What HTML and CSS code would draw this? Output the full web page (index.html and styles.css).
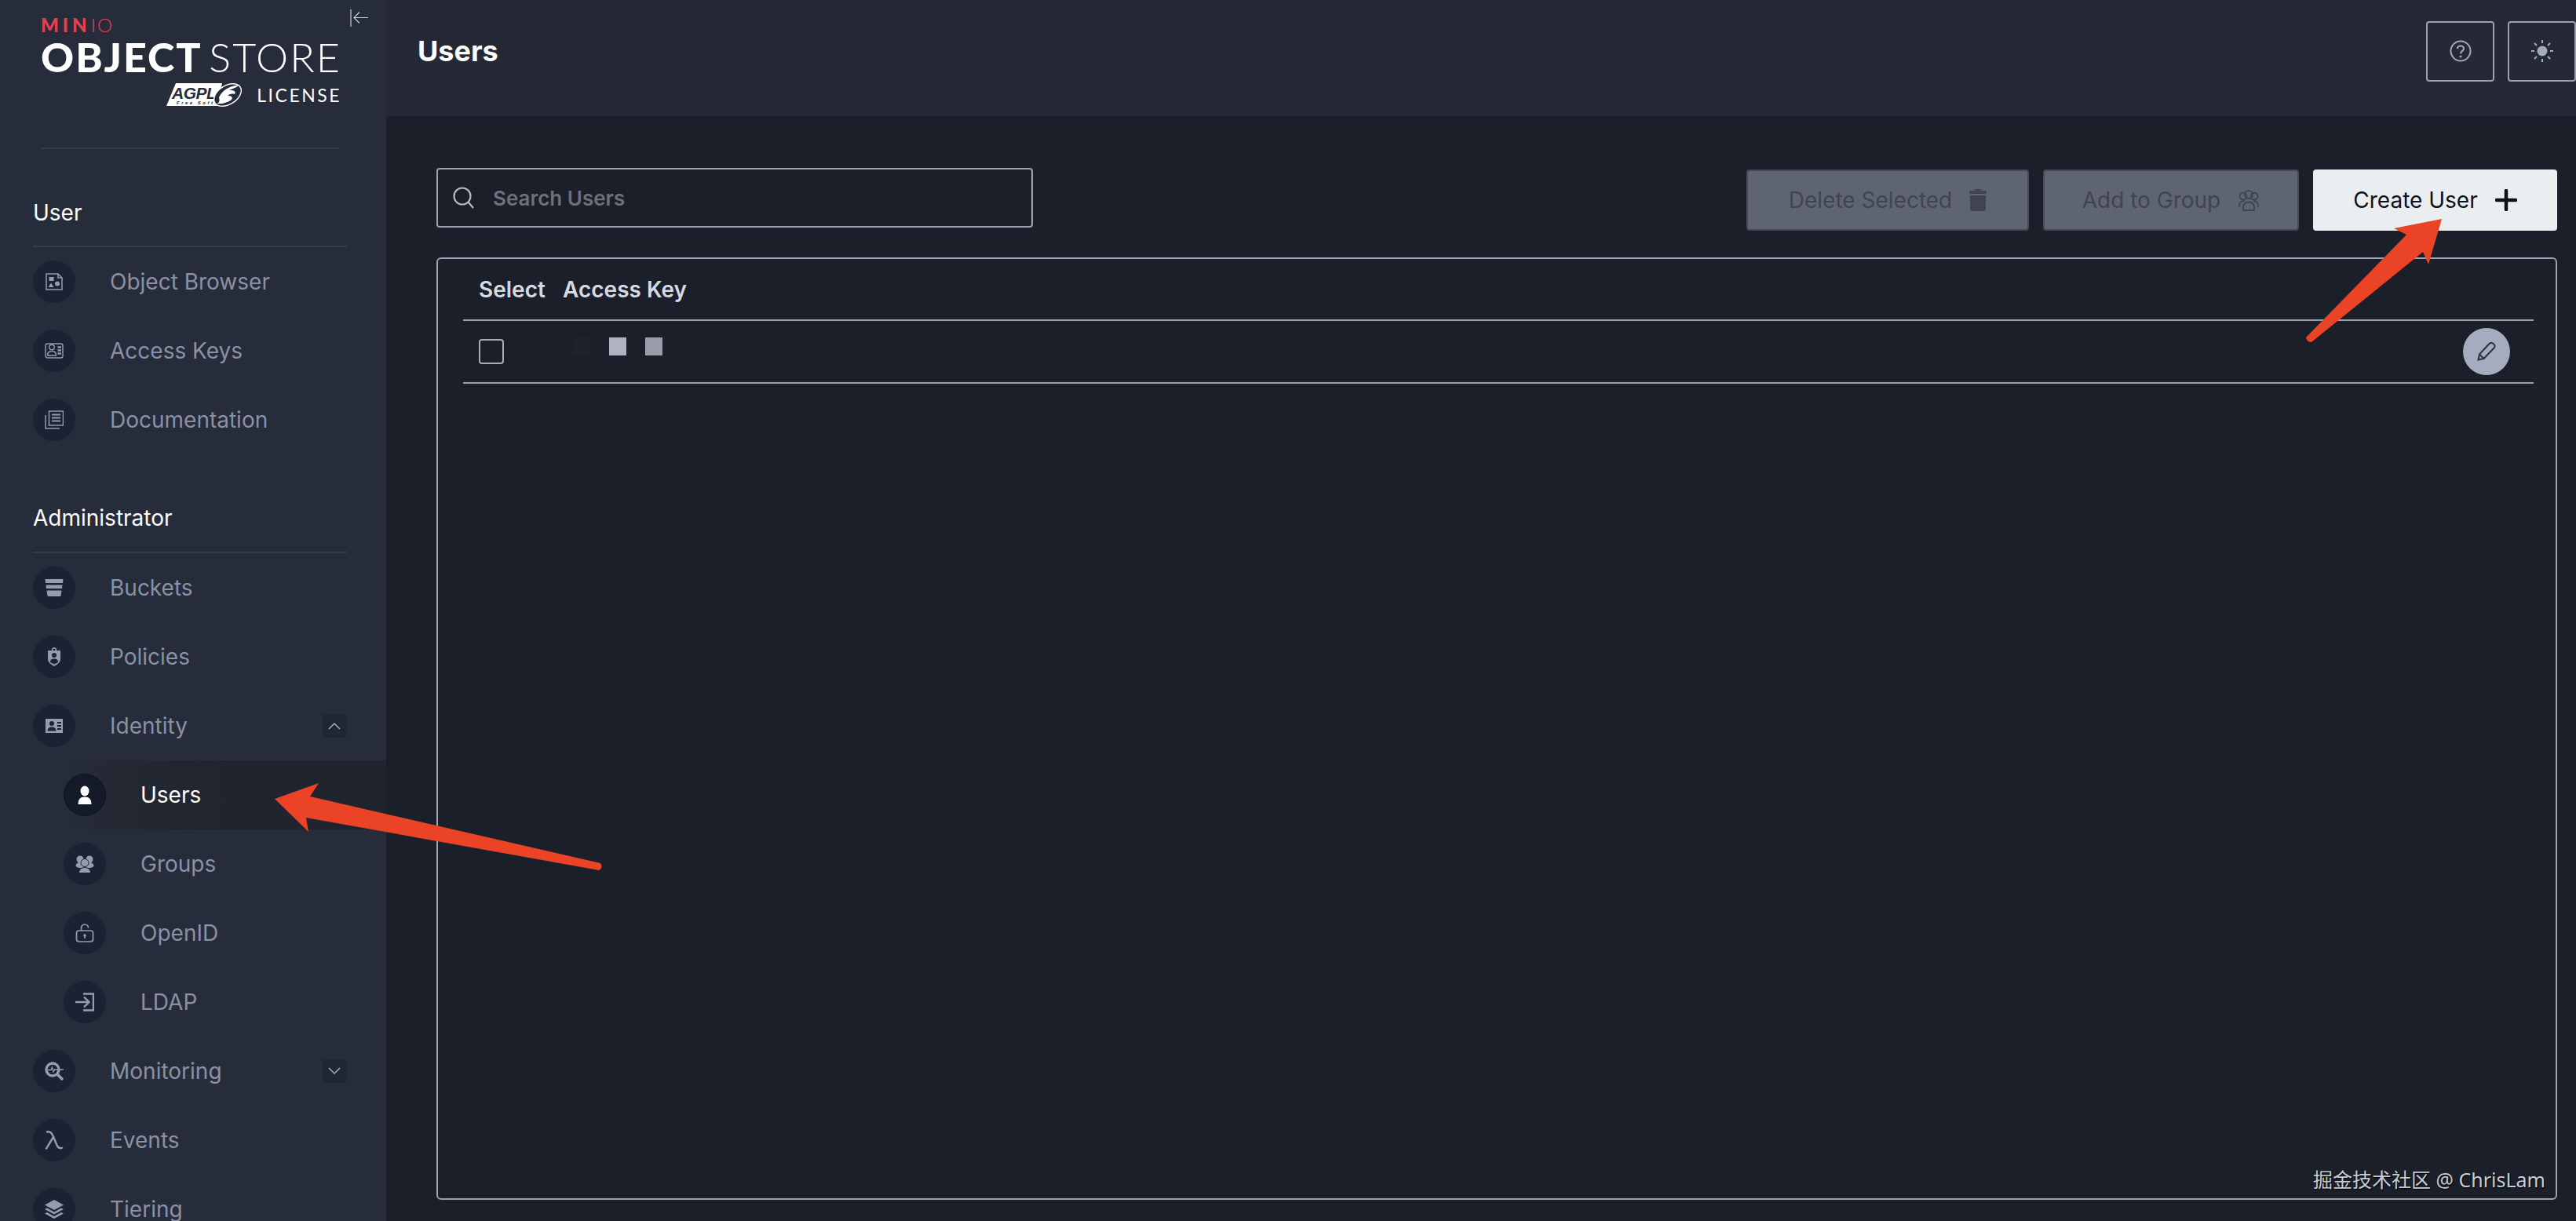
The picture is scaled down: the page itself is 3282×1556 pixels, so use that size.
FILE: index.html
```html
<!DOCTYPE html>
<html lang="en">
<head>
    <meta charset="UTF-8">
    <title>MinIO Console - Users</title>
    <link rel="stylesheet" href="styles.css">
</head>
<body>
    <div class="app">
        <aside class="sidebar">
            <div class="brand">
                <div class="brand-minio"><b>MIN</b><span>IO</span></div>
                <div class="brand-name"><b>OBJECT</b> <span>STORE</span></div>
                <div class="brand-license">
                    <svg class="agpl" width="98" height="34" viewBox="0 0 98 34">
                        <polygon points="13,2 72,2 66,31 1,31" fill="#fff"/>
                        <text x="8" y="22" class="agpl-text">AGPL</text>
                        <text x="14" y="29" class="agpl-small">Free Software</text>
                        <ellipse cx="79" cy="17" rx="19" ry="12" transform="rotate(-32 79 17)" fill="#262b3a" stroke="#fff" stroke-width="1.400"/>
                        <path d="M68 20 C73 9 85 5 94 4 C90 8 85 9 81 11 C87 11 90 12 88 16 C84 15 81 16 79 18 C84 18 86 20 84 23 C79 27 71 29 65 28 C69 27 69 24 68 20Z" fill="#fff"/>
                    </svg>
                    <span>LICENSE</span>
                </div>
            </div>
            <svg class="collapse" width="24" height="24" viewBox="0 0 24 24" fill="none" stroke="#c9cdd6" stroke-width="1.200">
                <path d="M1 1V23M23 11.500H5M12 4.500L5 11.500L12 18.500"/>
            </svg>

            <div class="brand-rule"></div>

            <div class="section first">User</div>
            <a class="item">
                <span class="ico"><svg viewBox="0 0 24 24" fill="none" stroke="currentColor" stroke-width="1.500"><path d="M2 2H17L22 7V22H2Z"/><path d="M17 2V7H22"/><rect x="5.500" y="6" width="6" height="5" fill="currentColor" stroke="none"/><circle cx="16" cy="14.500" r="3" fill="currentColor" stroke="none"/><path d="M8 13.500L11.500 19H4.500Z" fill="currentColor" stroke="none"/></svg></span>
                <span class="label">Object Browser</span>
            </a>
            <a class="item">
                <span class="ico"><svg viewBox="0 0 24 24" fill="none" stroke="currentColor" stroke-width="1.400"><rect x="1" y="3" width="22" height="18" rx="2.500"/><circle cx="9" cy="7.500" r="3.200" fill="#1b2233"/><path d="M3.500 18C3.500 14 6 12.500 9 12.500S14.500 14 14.500 18Z"/><path d="M16.500 7.500H21M16.500 11.500H21M16.500 15.500H21" stroke-width="2.400"/></svg></span>
                <span class="label">Access Keys</span>
            </a>
            <a class="item">
                <span class="ico"><svg viewBox="0 0 24 24" fill="none" stroke="currentColor" stroke-width="1.500"><rect x="5.500" y="1" width="18" height="18"/><path d="M9 5.500H20M9 9.500H20M9 13.500H20" stroke-width="1.800"/><path d="M1 6V23H19"/></svg></span>
                <span class="label">Documentation</span>
            </a>

            <div class="section">Administrator</div>
            <a class="item">
                <span class="ico"><svg viewBox="0 0 24 24" fill="currentColor"><path d="M0.500 1H23.500L23 6H1Z"/><path d="M1.500 8.500H22.500L22 13H2Z"/><path d="M2.500 15.500H21.500L20.500 22C20.400 22.700 20 23 19.500 23H4.500C4 23 3.600 22.700 3.500 22Z"/></svg></span>
                <span class="label">Buckets</span>
            </a>
            <a class="item">
                <span class="ico"><svg viewBox="0 0 24 24" fill="currentColor"><path d="M9 4V3A3 3 0 0 1 15 3V4H20V15C20 19 16 22 12 24C8 22 4 19 4 15V4ZM10.500 4H13.500V3A1.500 1.500 0 0 0 10.500 3Z"/><circle cx="12" cy="10" r="3" fill="#1b2233"/><path d="M7 19C7 15.500 9 14.500 12 14.500S17 15.500 17 19L12 21.500Z" fill="#1b2233"/></svg></span>
                <span class="label">Policies</span>
            </a>
            <a class="item">
                <span class="ico"><svg viewBox="0 0 24 24" fill="currentColor"><path d="M1 3H23V21H1ZM9 6A3 3 0 1 0 9 12A3 3 0 0 0 9 6ZM3.500 18.500H14.500C14.500 15 12 13.500 9 13.500S3.500 15 3.500 18.500ZM16 7V9H21V7ZM16 11V13H21V11ZM16 15V17H21V15Z" fill-rule="evenodd"/></svg></span>
                <span class="label">Identity</span>
                <span class="chev"><svg width="16" height="10" viewBox="0 0 16 10" fill="none" stroke="currentColor" stroke-width="1.500"><path d="M1 9L8 2L15 9"/></svg></span>
            </a>
            <a class="item sub active">
                <span class="ico"><svg viewBox="0 0 24 24" fill="currentColor"><ellipse cx="12" cy="7" rx="5.500" ry="6.500"/><path d="M3.500 24C3.500 17 7 14.500 12 14.500S20.500 17 20.500 24Z"/></svg></span>
                <span class="label">Users</span>
            </a>
            <a class="item sub">
                <span class="ico"><svg viewBox="0 0 24 24" fill="currentColor"><circle cx="6" cy="6" r="4.500"/><circle cx="18" cy="6" r="4.500"/><path d="M0.500 15C0.500 11.500 3 10 6 10H18C21 10 23.500 11.500 23.500 15L20 17H4Z"/><circle cx="12" cy="10.500" r="5" stroke="#1b2233"/><path d="M4.500 23.500C4.500 19 8 16.500 12 16.500S19.500 19 19.500 23.500Z" stroke="#1b2233"/></svg></span>
                <span class="label">Groups</span>
            </a>
            <a class="item sub">
                <span class="ico"><svg viewBox="0 0 24 24" fill="none" stroke="currentColor" stroke-width="1.700"><path d="M7.500 9V5.500A4.500 4.500 0 0 1 16.500 5.500"/><rect x="1.500" y="9" width="21" height="14" rx="3"/><circle cx="12" cy="15" r="1.800" fill="currentColor" stroke="none"/><path d="M12 15V19"/></svg></span>
                <span class="label">OpenID</span>
            </a>
            <a class="item sub">
                <span class="ico"><svg viewBox="0 0 24 24" fill="none" stroke="currentColor" stroke-width="2.400"><path d="M10 1.500H23V22.500H10"/><path d="M0 12H17M11 5.500L17.500 12L11 18.500"/></svg></span>
                <span class="label">LDAP</span>
            </a>
            <a class="item">
                <span class="ico"><svg viewBox="0 0 24 24" fill="none" stroke="currentColor"><circle cx="10" cy="10" r="8" stroke-width="3.400"/><path d="M15.500 15.500L23 23" stroke-width="3.500"/><path d="M4 10.500H8L9.500 7L11 13L12.500 10H24" stroke-width="1.300"/></svg></span>
                <span class="label">Monitoring</span>
                <span class="chev"><svg width="16" height="10" viewBox="0 0 16 10" fill="none" stroke="currentColor" stroke-width="1.500"><path d="M1 1L8 8L15 1"/></svg></span>
            </a>
            <a class="item">
                <span class="ico"><svg viewBox="0 0 24 24" fill="none" stroke="currentColor" stroke-width="2.400"><path d="M2 1.500C7 0.500 9 2.500 11 7.500L15.500 18.500C17 22 19.500 23 23 21.500"/><path d="M11 8L1.500 23.500"/></svg></span>
                <span class="label">Events</span>
            </a>
            <a class="item">
                <span class="ico"><svg viewBox="0 0 24 24" fill="currentColor"><path d="M12 0L24 6.500L12 13L0 6.500Z"/><path d="M3 10.500L12 15.500L21 10.500L24 12L12 18.500L0 12Z"/><path d="M3 16L12 21L21 16L24 17.500L12 24L0 17.500Z"/></svg></span>
                <span class="label">Tiering</span>
            </a>
        </aside>

        <div class="main">
            <header class="topbar">
                <h1>Users</h1>
                <div class="top-btns">
                    <button class="top-btn"><svg width="28" height="28" viewBox="0 0 28 28" fill="none" stroke="currentColor"><circle cx="14" cy="14" r="12.500" stroke-width="2"/><path d="M10 11C10 8.500 12 7.500 14 7.500S18 8.700 18 11C18 14 14 14 14 17.500" stroke-width="2.200"/><circle cx="14" cy="21" r="1.500" fill="currentColor" stroke="none"/></svg></button>
                    <button class="top-btn"><svg width="30" height="30" viewBox="0 0 30 30" fill="none" stroke="currentColor" stroke-width="2"><circle cx="15" cy="15" r="6.500" fill="currentColor" stroke="none"/><path d="M15 1V5M15 25V29M1 15H5M25 15H29M5 5L8 8M22 22L25 25M25 5L22 8M8 22L5 25"/></svg></button>
                </div>
            </header>

            <div class="content">
                <div class="toolbar">
                    <div class="search">
                        <svg width="30" height="30" viewBox="0 0 30 30" fill="none" stroke="#b6bac4" stroke-width="2.200"><circle cx="13" cy="13" r="10.500"/><path d="M20.500 20.500L27 28"/></svg>
                        <span class="placeholder">Search Users</span>
                    </div>
                    <div class="actions">
                        <button class="btn off w-delete">Delete Selected
                            <svg width="22" height="28" viewBox="0 0 22 28" fill="currentColor"><path d="M7 0H15V2H22V6H0V2H7Z"/><path d="M1 8H21V25C21 26.500 20 28 18 28H4C2 28 1 26.500 1 25Z"/></svg>
                        </button>
                        <button class="btn off w-group">Add to Group
                            <svg width="28" height="28" viewBox="0 0 28 28" fill="none" stroke="currentColor" stroke-width="1.800"><circle cx="7" cy="9" r="4.500"/><circle cx="21" cy="9" r="4.500"/><circle cx="14" cy="7" r="5"/><path d="M2 23C1 18 4 15 8 15M26 23C27 18 24 15 20 15"/><path d="M7 27C6 20 9 16.500 14 16.500S22 20 21 27Z"/></svg>
                        </button>
                        <button class="btn on w-create">Create User
                            <svg width="28" height="28" viewBox="0 0 28 28" fill="none" stroke="currentColor" stroke-width="4.500" stroke-linecap="round"><path d="M14 2V26M2 14H26"/></svg>
                        </button>
                    </div>
                </div>

                <div class="table-box">
                    <div class="row head">
                        <span class="col-select">Select</span>
                        <span>Access Key</span>
                    </div>
                    <div class="row">
                        <span class="check"></span>
                        <span class="blur-key"><i></i><i></i><i></i></span>
                        <button class="edit"><svg width="26" height="26" viewBox="0 0 26 26" fill="none" stroke="currentColor" stroke-width="2"><path d="M2.500 23.500L4 16.500L16.500 3C18 1.500 20 1.500 22 3.200C24 5 24 7 22.500 8.500L9.500 22Z"/><path d="M4 16.500L9.500 22"/></svg></button>
                    </div>
                </div>
            </div>
        </div>

        <svg class="arrows" width="3282" height="1556" viewBox="0 0 3282 1556">
            <path d="M350 1018L406 998L395 1015L765 1100Q769 1106 763 1109L390 1042L393 1060Z" fill="#ea4325"/>
            <path d="M3111 279L3050 291L3066 299L2938 430Q2939 436 2945 436L3087 321L3094 337Z" fill="#ea4325"/>
        </svg>
        <div class="mark">掘金技术社区 @ ChrisLam</div>
    </div>
</body>
</html>
```

FILE: styles.css
```css
* {
    box-sizing: border-box;
}
html, body {
    margin: 0;
    height: 100%;
    overflow: hidden;
    background: #1a1f29;
}
body {
    font-family: Inter, "Noto Sans", sans-serif;
    font-size: 28px;
}
.app {
    position: relative;
    display: grid;
    grid-template-columns: 492px 1fr;
    width: 3282px;
    height: 1556px;
    overflow: hidden;
}

/* sidebar */
.sidebar {
    position: relative;
    background: #272c3b;
    height: 1556px;
    overflow: hidden;
}
.brand {
    height: 188px;
    width: 432px;
    padding: 20px 0 0 52px;
    color: #fff;
    font-family: Lato, "Noto Sans", sans-serif;
}
.brand-minio {
    font-size: 24px;
    line-height: 24px;
    color: #e5404f;
    letter-spacing: 2px;
    font-weight: 300;
}
.brand-minio b {
    font-weight: 900;
    letter-spacing: 5px;
}
.brand-name {
    display: flex;
    justify-content: space-between;
    margin-right: -3px;
    font-size: 52px;
    line-height: 56px;
    white-space: nowrap;
}
.brand-name b {
    font-weight: 900;
    letter-spacing: 2px;
}
.brand-name span {
    font-weight: 300;
    letter-spacing: 2px;
}
.brand-license {
    display: flex;
    justify-content: flex-end;
    align-items: center;
    gap: 18px;
    font-size: 23px;
    letter-spacing: 2.500px;
    height: 34px;
    margin-top: 4px;
    margin-right: -3px;
}
.agpl-text {
    font: italic 700 21px "Liberation Sans", sans-serif;
    fill: #272c3b;
    letter-spacing: -0.500px;
}
.agpl-small {
    font: italic 700 6px "Liberation Sans", sans-serif;
    fill: #272c3b;
}
.collapse {
    position: absolute;
    left: 446px;
    top: 11px;
}
.brand-rule {
    height: 2px;
    margin: 0 60px 0 52px;
    background: #363c4d;
}
.section {
    height: 126px;
    margin: 0 50px 0 42px;
    padding-top: 64px;
    line-height: 34px;
    font-size: 28px;
    color: #fff;
    border-bottom: 2px solid #363c4d;
}
.section.first {
    height: 125px;
}
.item {
    display: flex;
    align-items: center;
    height: 88px;
    padding-left: 42px;
    color: #8a91a4;
}
.item.sub {
    padding-left: 81px;
}
.item.active {
    color: #fff;
    background: linear-gradient(90deg, #272c3b 16%, #242833 30%, #20242e 60%);
}
.ico {
    display: flex;
    align-items: center;
    justify-content: center;
    flex: none;
    width: 54px;
    height: 54px;
    border-radius: 50%;
    background: #1b2233;
    color: #949db0;
}
.ico svg {
    width: 24px;
    height: 24px;
}
.active .ico {
    color: #fff;
    background: #141a28;
    border: 1px solid #0e1320;
}
.label {
    margin-left: 44px;
    line-height: 40px;
}
.chev {
    display: flex;
    align-items: center;
    justify-content: center;
    width: 30px;
    height: 30px;
    margin-left: auto;
    margin-right: 51px;
    border-radius: 3px;
    background: #212635;
    color: #a8aebd;
}

/* header */
.main {
    min-width: 0;
}
.topbar {
    display: flex;
    align-items: center;
    justify-content: space-between;
    height: 148px;
    padding: 0 0 18px 40px;
    background: #242935;
}
.topbar h1 {
    margin: 0;
    font-size: 36px;
    font-weight: 700;
    color: #fff;
}
.top-btns {
    display: flex;
    gap: 17px;
}
.top-btn {
    display: flex;
    align-items: center;
    justify-content: center;
    width: 87px;
    height: 77px;
    padding: 0;
    border: 2px solid #9ca1ad;
    border-radius: 4px;
    background: transparent;
    color: #a3abbc;
}

/* content */
.content {
    padding: 66px 24px 0 64px;
}
.toolbar {
    display: flex;
    justify-content: space-between;
    height: 80px;
}
.search {
    display: flex;
    align-items: center;
    gap: 22px;
    width: 760px;
    height: 76px;
    padding-left: 18px;
    border: 2px solid #9ca1ad;
    border-radius: 4px;
}
.placeholder {
    font-size: 26px;
    font-weight: 600;
    color: #6d7179;
}
.actions {
    display: flex;
    gap: 18px;
    padding-top: 2px;
}
.btn {
    display: flex;
    align-items: center;
    justify-content: center;
    gap: 22px;
    height: 78px;
    padding: 0;
    border-radius: 4px;
    font-family: inherit;
    font-size: 28px;
}
.btn.off {
    background: #5f6471;
    border: 2px solid #454a57;
    color: #3f4450;
}
.btn.on {
    background: #eaeef0;
    border: 0;
    color: #0d1119;
}
.w-delete {
    width: 360px;
}
.w-group {
    width: 326px;
}
.w-create {
    width: 311px;
}
.table-box {
    height: 1201px;
    margin-top: 34px;
    padding: 0 28px 0 32px;
    border: 2px solid #9ca1ad;
    border-radius: 6px;
}
.row {
    display: flex;
    align-items: center;
    height: 80px;
    padding: 0 30px 0 20px;
    border-bottom: 2px solid #9ca1ad;
    color: #d6d9e1;
}
.row.head {
    height: 79px;
    font-weight: 600;
}
.col-select {
    width: 107px;
}
.check {
    width: 32px;
    height: 32px;
    border: 2px solid #a8acb6;
    border-radius: 4px;
}
.blur-key {
    display: flex;
    gap: 24px;
    margin-left: 88px;
    margin-bottom: 14px;
}
.blur-key i {
    width: 22px;
    height: 23px;
    background: #b0b3bf;
}
.blur-key i:first-child {
    background: #1e222c;
}
.blur-key i:last-child {
    background: #9a9da9;
}
.edit {
    display: flex;
    align-items: center;
    justify-content: center;
    width: 60px;
    height: 60px;
    margin-left: auto;
    padding: 0;
    border: 0;
    border-radius: 50%;
    background: #a3adbf;
    color: #2a3040;
}

/* annotations drawn on top of the screenshot */
.arrows {
    position: absolute;
    left: 0;
    top: 0;
    pointer-events: none;
}
.mark {
    position: absolute;
    right: 39px;
    top: 1486px;
    font-family: "Noto Sans", "Noto Sans CJK SC", sans-serif;
    font-size: 25px;
    line-height: 34px;
    color: #c9ccd3;
    text-shadow: 1px 1px 1px #000;
    white-space: nowrap;
}
```
